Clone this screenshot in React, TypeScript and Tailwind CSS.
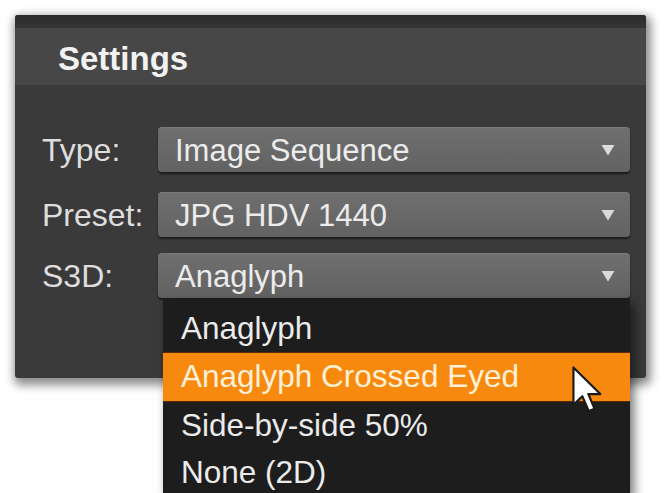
const FONT = 'font-[family-name:Liberation_Sans,Arial,sans-serif]';

const OPTIONS = ['Anaglyph', 'Anaglyph Crossed Eyed', 'Side-by-side 50%', 'None (2D)'];

function Arrow() {
  return (
    <svg width="14" height="12" viewBox="0 0 14 12" className="shrink-0">
      <path d="M0.5 1 L13.5 1 L7 11.5 Z" fill="#dadada" />
    </svg>
  );
}

function Cursor() {
  return (
    <svg width="30" height="48" viewBox="0 0 12.5 20" className="absolute left-[409px] top-[13px]">
      <path
        d="M0.6 0.6 L0.6 16.2 L4.3 12.6 L7 18.8 L9.4 17.8 L6.8 11.7 L11.8 11.7 Z"
        fill="#ffffff"
        stroke="#1a1a1a"
        strokeWidth="0.9"
        strokeLinejoin="round"
      />
    </svg>
  );
}

function Select({ value, open }: { value: string; open?: boolean }) {
  return (
    <div className="relative flex-1">
      <div className="flex h-[45px] items-center justify-between rounded-[4px] border-t border-[#7a7a7a] bg-gradient-to-b from-[#6f6f6f] to-[#626262] pl-[17px] pr-[15px] shadow-[0_2px_2px_rgba(0,0,0,0.55)]">
        <span className="text-[31px] leading-none text-[#ececec]">{value}</span>
        <Arrow />
      </div>
      {open ? (
        <div className="absolute top-[46px] left-[5px] right-0 z-20 bg-[#1d1d1d] pt-[6px] shadow-[4px_4px_10px_rgba(0,0,0,0.55)]">
          {OPTIONS.map((option, i) =>
            i === 1 ? (
              <div
                key={option}
                className="relative flex h-[50px] items-center border-y border-[#5a2a00] bg-[#f7890f] pl-[18px] text-[31.5px] leading-none text-[#fff0d6]"
              >
                {option}
                <Cursor />
              </div>
            ) : (
              <div key={option} className="flex h-[47px] items-center pl-[18px] text-[31.5px] leading-none text-[#ebebeb]">
                {option}
              </div>
            ),
          )}
        </div>
      ) : null}
    </div>
  );
}

function Row({ label, value, open, className = '' }: { label: string; value: string; open?: boolean; className?: string }) {
  return (
    <div className={`flex items-center ${className}`}>
      <span className="w-[116px] shrink-0 whitespace-nowrap text-[32px] leading-none text-[#dedede]">{label}</span>
      <Select value={value} open={open} />
    </div>
  );
}

export default function App() {
  return (
    <div className={`h-[493px] w-[664px] overflow-hidden bg-white pt-[15px] pl-[15px] ${FONT}`}>
      <div className="relative h-[363px] w-[631px] rounded-[3px] bg-[#3a3a3a] shadow-[2px_4px_10px_3px_rgba(0,0,0,0.45)]">
        <div className="h-[13px] rounded-t-[3px] bg-gradient-to-b from-[#2c2c2c] to-[#343434]" />
        <div className="flex h-[57px] items-center bg-[#474747] pl-[43px] pt-[4px]">
          <span className="text-[33px] font-bold leading-none text-[#f2f2f2]">Settings</span>
        </div>
        <div className="pl-[27px] pr-[16px] pt-[42px]">
          <Row label="Type:" value="Image Sequence" />
          <Row label="Preset:" value="JPG HDV 1440" className="mt-[20px]" />
          <Row label="S3D:" value="Anaglyph" open className="mt-[16px]" />
        </div>
      </div>
    </div>
  );
}
